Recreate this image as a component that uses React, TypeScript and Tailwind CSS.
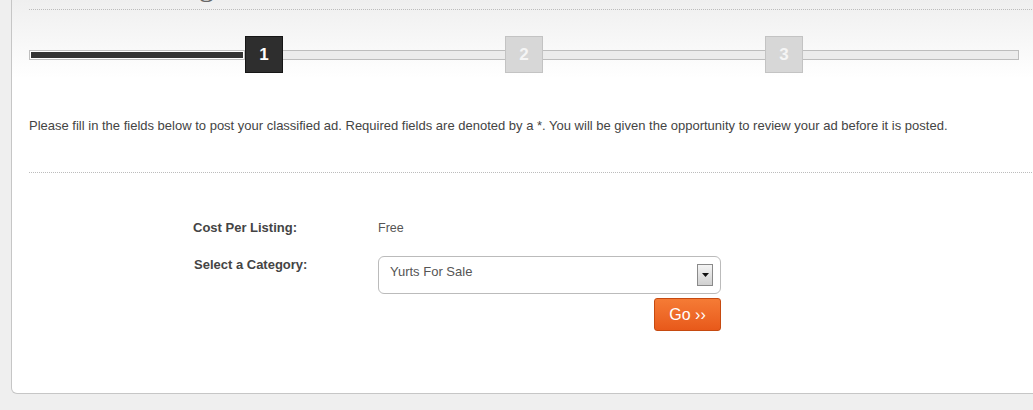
import React from 'react';

const steps = [
  { n: 1, active: true },
  { n: 2, active: false },
  { n: 3, active: false },
];

const Track = ({ w, last }: { w: number; last?: boolean }) => (
  <div
    className={`h-[10px] border-y border-[#bdbdbd] bg-[#ececec] ${last ? 'border-r' : ''}`}
    style={{ width: w }}
  />
);

const Step = ({ n, active }: { n: number; active: boolean }) => (
  <div
    className={`w-[38px] h-[37px] shrink-0 flex items-center justify-center text-[17px] font-bold border ${
      active ? 'bg-[#2e2e2e] border-[#161616] text-white' : 'bg-[#d7d7d7] border-[#c3c3c3] text-[#f5f5f5]'
    }`}
  >
    {n}
  </div>
);

const PostListing = () => {
  return (
    <div className="w-[1033px] h-[410px] overflow-hidden bg-[#efefef] font-['Liberation_Sans',Arial,sans-serif]">
      <div className="flow-root ml-[11px] w-[1030px] h-[394px] border-l border-r border-b border-[#c6c6c6] rounded-bl-[6px] bg-linear-to-b from-[#efefef] from-0% to-white to-20% pl-[17px]">
        <h1 className="-mt-[29px] h-[30px] text-[30px] leading-[30px] text-[#666] font-['Liberation_Serif',serif] pl-[20px]">
          Post a Listing
        </h1>
        <div className="mt-[8px] border-t border-dotted border-[#bcbcbc]" />

        {/* progress */}
        <div className="mt-[26px] flex items-center">
          <div className="w-[216px] h-[10px] border border-[#bfbfbf] bg-white p-[1px]">
            <div className="h-full bg-[#333]" />
          </div>
          <Step {...steps[0]} />
          <Track w={222} />
          <Step {...steps[1]} />
          <Track w={222} />
          <Step {...steps[2]} />
          <Track w={216} last />
        </div>

        <p className="mt-[44px] text-[13px] leading-[18px] text-[#444]">
          Please fill in the fields below to post your classified ad. Required fields are denoted by a *. You will be given the opportunity to review your ad before it is posted.
        </p>
        <div className="mt-[37px] border-t border-dotted border-[#bcbcbc]" />

        {/* form */}
        <div className="mt-[46px] ml-[164px] grid grid-cols-[185px_343px] gap-y-[19px] text-[12.5px] leading-[18px]">
          <div className="font-bold text-[13px] text-[#444]">Cost Per Listing:</div>
          <div className="text-[#555]">Free</div>

          <div className="font-bold text-[13px] text-[#444] pl-[1px]">Select a Category:</div>
          <div>
            <div className="h-[38px] border border-[#bbbbbb] rounded-[6px] bg-white flex items-start justify-between pl-[11px] pr-[7px] pt-[6px]">
              <span className="text-[13px] text-[#555]">Yurts For Sale</span>
              <div className="mt-[1px] w-[16px] h-[22px] border border-[#8a8a8a] bg-linear-to-b from-[#f4f4f4] to-[#d0d0d0] flex items-center justify-center">
                <svg width="7" height="4" viewBox="0 0 7 4">
                  <path d="M0 0h7L3.5 4z" fill="#111" />
                </svg>
              </div>
            </div>
            <div className="mt-[4px] flex justify-end">
              <button className="w-[67px] h-[33px] rounded-[3px] border border-[#c64a10] bg-linear-to-b from-[#f57b35] to-[#e8591a] text-white text-[16px] leading-none">
                Go ››
              </button>
            </div>
          </div>
        </div>
      </div>
    </div>
  );
};

export default PostListing;
